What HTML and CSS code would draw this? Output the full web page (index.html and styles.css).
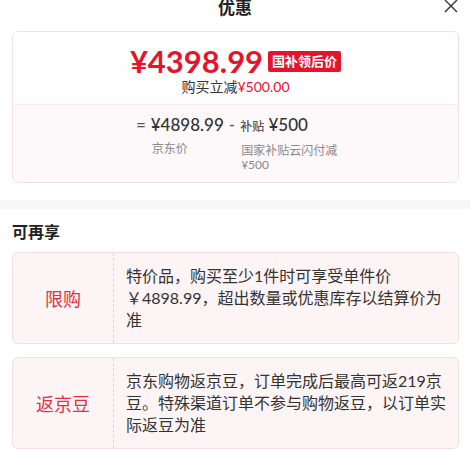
FILE: index.html
```html
<!DOCTYPE html>
<html lang="zh-CN">

<head>
  <meta charset="UTF-8">
  <meta name="viewport" content="width=device-width, initial-scale=1.0">
  <title>优惠</title>
  <link rel="stylesheet" href="styles.css">
</head>

<body>
  <div class="header">
    <span></span>
    <div class="title">优惠</div>
    <div class="close">
      <svg width="14" height="14" viewBox="0 0 14 14">
        <path d="M1 1L13 13M13 1L1 13" stroke="#333" stroke-width="1.4" fill="none" />
      </svg>
    </div>
  </div>

  <div class="price-card">
    <div class="price-top">
      <div class="price-row">
        <span class="price">¥4398.99</span>
        <span class="price-tag">国补领后价</span>
      </div>
      <div class="price-sub">购买立减<span class="red">¥500.00</span></div>
    </div>
    <div class="price-bottom">
      <div class="formula">
        <div class="op">=</div>
        <div class="term">
          <div class="term-value">¥4898.99</div>
          <div class="term-label">京东价</div>
        </div>
        <div class="op">-</div>
        <div class="term">
          <div class="term-value"><span class="term-small">补贴</span> ¥500</div>
          <div class="term-label wrap">国家补贴云闪付减 ¥500</div>
        </div>
      </div>
    </div>
  </div>

  <div class="band"></div>

  <div class="section-title">可再享</div>

  <div class="promo-list">
    <div class="promo">
      <div class="promo-name">限购</div>
      <div class="promo-desc">特价品，购买至少1件时可享受单件价￥4898.99，超出数量或优惠库存以结算价为准</div>
    </div>
    <div class="promo">
      <div class="promo-name">返京豆</div>
      <div class="promo-desc">京东购物返京豆，订单完成后最高可返219京豆。特殊渠道订单不参与购物返豆，以订单实际返豆为准</div>
    </div>
  </div>
</body>
</html>
```

FILE: styles.css
```css
body {
  margin: 0;
  font-family: Lato, "Noto Sans CJK SC", sans-serif;
  color: #333;
  background-color: #fff;
}
.header {
  height: 31px;
  display: grid;
  grid-template-columns: 1fr auto 1fr;
  padding: 0 12px;
}
.title {
  font-size: 17px;
  font-weight: bold;
  line-height: 16px;
  color: #222;
}
.close {
  justify-self: end;
  height: 14px;
}
.close svg {
  display: block;
  margin-top: -1px;
}
.price-card {
  margin: 0 11px 0 12px;
  border: 1px solid #f4dfe2;
  border-radius: 6px;
  overflow: hidden;
}
.price-top {
  padding: 11px 0 9px;
  background-color: #fffefe;
  border-bottom: 1px solid #f8e9ec;
  text-align: center;
}
.price-row {
  display: flex;
  justify-content: center;
  align-items: center;
  height: 36px;
}
.price {
  font-size: 31px;
  font-weight: bold;
  color: #e5142c;
  line-height: 36px;
}
.price-tag {
  margin-left: 5px;
  padding: 0 4px;
  height: 21px;
  line-height: 21px;
  font-size: 13px;
  font-weight: bold;
  color: #fff;
  background-color: #e5142c;
  border-radius: 2px;
}
.price-sub {
  font-size: 14px;
  line-height: 16px;
  color: #333;
}
.red {
  color: #e5142c;
}
.price-bottom {
  padding: 9px 0 10px;
  background-color: #fdf8f9;
}
.formula {
  display: flex;
  justify-content: center;
  gap: 5px;
  padding-left: 4px;
}
.op {
  font-size: 17px;
  line-height: 22px;
  color: #555;
}
.term-value {
  font-size: 17px;
  line-height: 22px;
  color: #333;
  font-weight: 500;
}
.term-small {
  font-size: 12px;
  color: #555;
}
.term-label {
  margin-top: 6px;
  padding-left: 1px;
  font-size: 12px;
  line-height: 14px;
  color: #8a8a8a;
}
.wrap {
  width: 98px;
}
.band {
  margin-top: 17px;
  height: 9px;
  background-color: #f6f7fb;
}
.section-title {
  padding: 12px 12px 0;
  font-size: 16px;
  font-weight: bold;
  line-height: 22px;
  color: #222;
  margin-bottom: 9px;
}
.promo-list {
  display: flex;
  flex-direction: column;
  gap: 13px;
  padding: 0 11px 0 12px;
}
.promo {
  display: flex;
  background-color: #fdf4f5;
  border: 1px solid #f4dde0;
  border-radius: 6px;
}
.promo-name {
  width: 100px;
  flex-shrink: 0;
  border-right: 1px dashed #e8cdd1;
  display: flex;
  justify-content: center;
  align-items: center;
  font-size: 18px;
  color: #e1303e;
}
.promo-desc {
  flex: 1;
  padding: 12px 9px 12px 12px;
  font-size: 16px;
  line-height: 22px;
  color: #333;
}
```
